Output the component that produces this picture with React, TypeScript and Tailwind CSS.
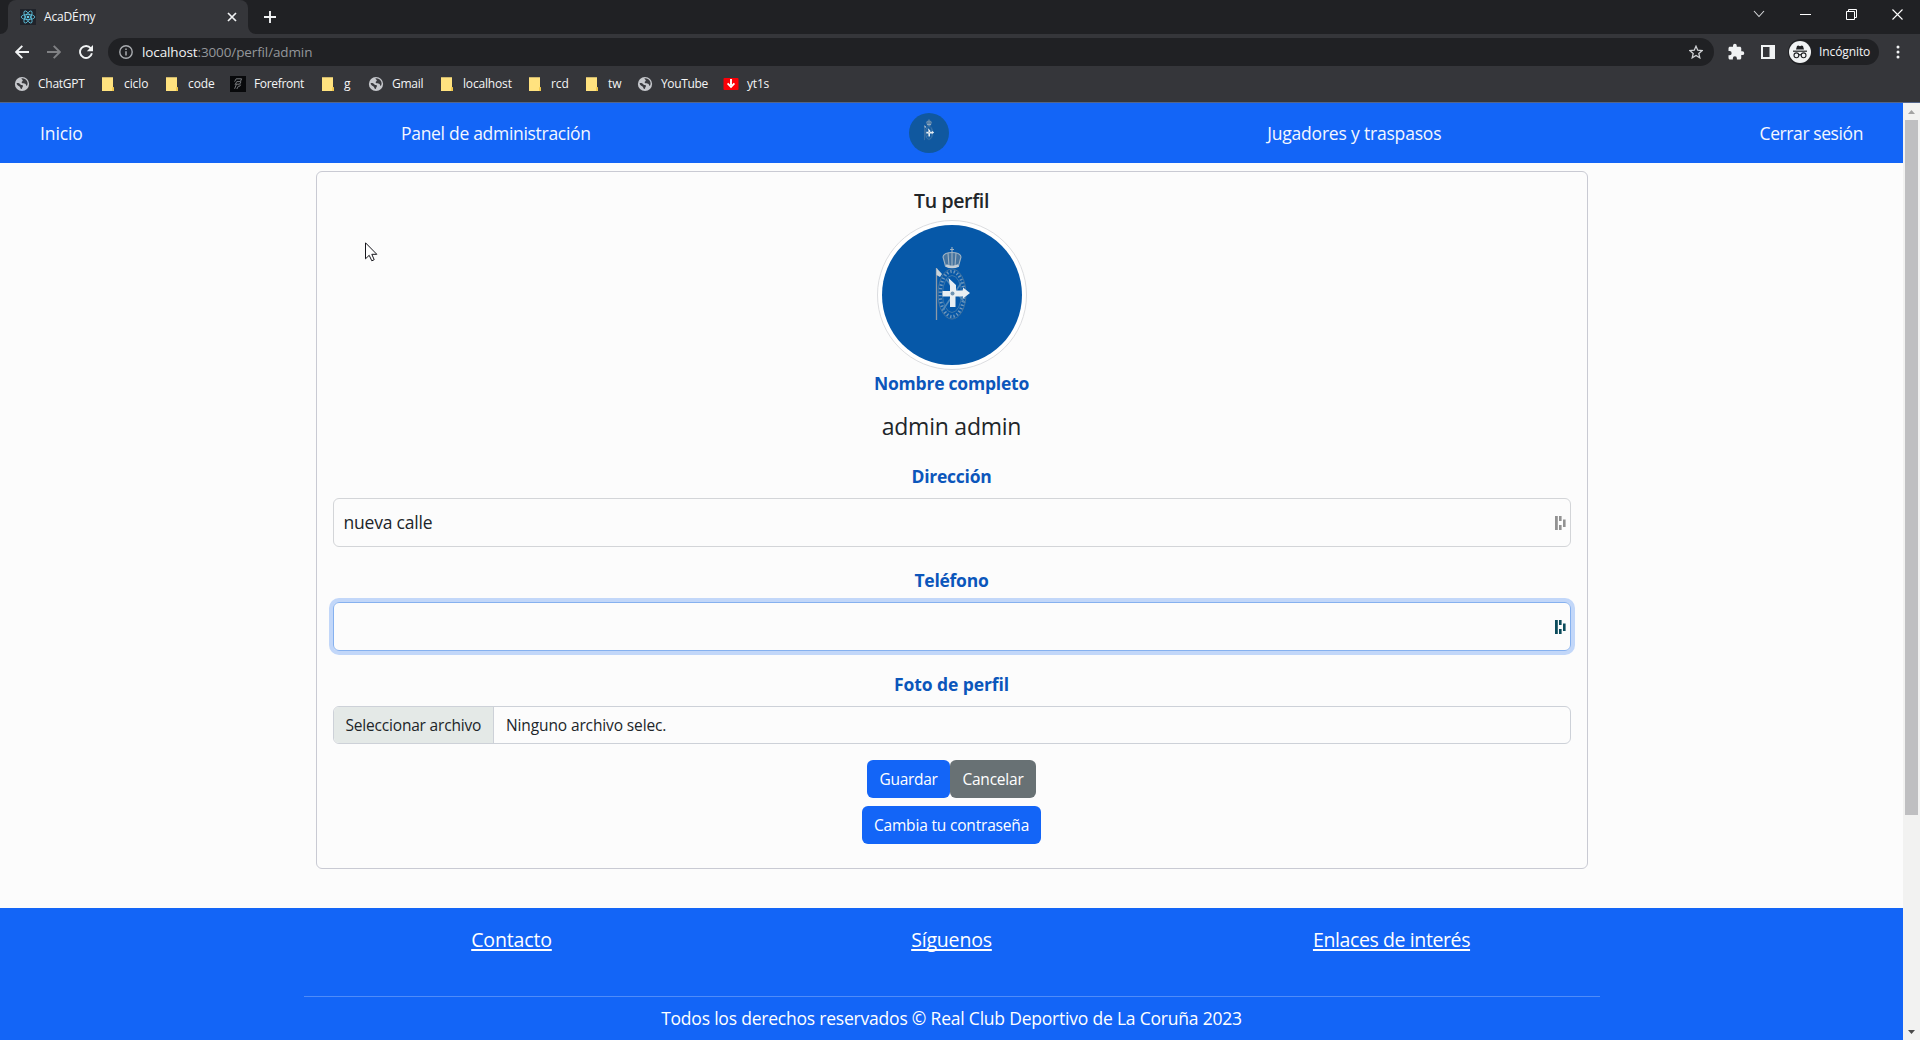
import React from "react";

function Globe() {
  return (
    <svg width="16" height="16" viewBox="0 0 16 16" className="shrink-0">
      <circle cx="8" cy="8" r="7.1" fill="#c6c8cc" />
      <path d="M2.6 7.2C4.2 6.6 5.6 7.4 6.4 8.4C7.2 9.2 8.6 8.6 9 9.6C9.3 10.6 8.2 11 8 12.6C7.4 13.4 6.4 12.6 6.2 11.4C6 10 4.4 10 3.6 9.2C3 8.6 2.6 8 2.6 7.2Z" fill="#3a3b3f" />
      <path d="M7.4 2.4C9.4 2 12 3.2 13.2 5.4C13.9 7 13.6 8.8 12.8 10C11.8 9.6 12.2 8.2 11.2 7.8C10 7.4 8.6 7.8 7.8 6.8C7 5.6 9 5.2 8.8 4.2C8.6 3.4 7.6 3.4 7.4 2.4Z" fill="#3a3b3f" />
    </svg>
  );
}

function Folder() {
  return (
    <svg width="16" height="16" viewBox="0 0 16 16" className="shrink-0">
      <path d="M2 1.2H13V11.5H14V15H2Z" fill="#ffe27f" />
      <path d="M12 11.2H14V15H12Z" fill="#f2c94c" />
    </svg>
  );
}

function ForefrontIcon() {
  return (
    <svg width="16" height="16" viewBox="0 0 16 16" className="shrink-0">
      <rect width="16" height="16" fill="#08090b" />
      <g fill="none" stroke="#85878a" strokeWidth="0.9">
        <path d="M4.600 5.600L6.200 2.800H11.600L10.400 5.600H6.800L5 8.800" />
        <path d="M5.600 8.200H9.600L11 5.800M4.600 12.800L6.400 8.400M6.800 13L8.400 10.200H9.800L10.600 8.600" />
      </g>
    </svg>
  );
}

function DownloadIcon() {
  return (
    <svg width="16" height="16" viewBox="0 0 16 16" className="shrink-0">
      <rect x="0.5" y="2" width="15" height="12" rx="1" fill="#fb0007" />
      <path d="M8 3V9M4.6 7.4L8 10.8L11.4 7.4" fill="none" stroke="#fff" strokeWidth="1.9" />
    </svg>
  );
}

function ReactIcon() {
  return (
    <svg width="16" height="16" viewBox="0 0 16 16" className="shrink-0">
      <rect width="16" height="16" fill="#20232a" />
      <g fill="none" stroke="#61c9e6" strokeWidth="0.8">
        <ellipse cx="8" cy="8" rx="6.8" ry="2.6" />
        <ellipse cx="8" cy="8" rx="6.8" ry="2.6" transform="rotate(60 8 8)" />
        <ellipse cx="8" cy="8" rx="6.8" ry="2.6" transform="rotate(120 8 8)" />
      </g>
      <circle cx="8" cy="8" r="1.3" fill="#61c9e6" />
    </svg>
  );
}

function Crest({ size }: { size: number }) {
  return (
    <svg width={size} height={size} viewBox="0 0 140 140" className="block">
      <g fill="none" stroke="#9fb2c2" strokeWidth="1.1">
        <path d="M61 32C62 26 78 26 79 32L76.500 41C72 42.500 67 42.500 63.500 41Z" fill="#46749f" />
        <path d="M66 28L67 41M70 26V42M74 28L73 41M70 22V27M68 24.500H72" />
      </g>
      <path d="M64 40.500C68 42.500 72 42.500 76.500 40.500" stroke="#c3ced7" strokeWidth="2.600" fill="none" />
      <path d="M54.500 43V95" stroke="#8d9aa6" strokeWidth="1.3" />
      <path d="M54.500 43L60 49L58 52L54.500 50Z" fill="#c9d4dc" />
      <ellipse cx="70" cy="69" rx="14" ry="25" fill="none" stroke="#44749f" strokeWidth="1" />
      <ellipse cx="70" cy="69" rx="11.800" ry="22.500" fill="none" stroke="#a9bac8" strokeWidth="3.200" strokeDasharray="1.400 2.100" strokeOpacity="0.650" />
      <ellipse cx="70" cy="69" rx="9.500" ry="18.500" fill="none" stroke="#3f78ab" strokeWidth="1" />
      <path d="M64 54L83 78M60 86L80 57" stroke="#5088b9" strokeWidth="1.600" />
      <path d="M66.500 53L74 60V65.500H81V62.500L88 68L81 73.500V71.500H73.500V82H68V71.500H60.500V66H68V61Z" fill="#e8eef2" />
      <circle cx="70.500" cy="68.500" r="2" fill="#6e93b1" />
    </svg>
  );
}

function FieldMark({ className }: { className: string }) {
  return (
    <svg width="11" height="14" viewBox="0 0 11 14" className={className} fill="currentColor">
      <rect x="0" y="0" width="2.800" height="14" />
      <rect x="4" y="0" width="2.600" height="5" />
      <rect x="4" y="9" width="2.600" height="5" />
      <rect x="8" y="3.500" width="2.600" height="7.500" />
    </svg>
  );
}

const bookmarks = [
  { icon: <Globe />, name: "ChatGPT", cls: "w-[86px] tracking-[-0.25px]" },
  { icon: <Folder />, name: "ciclo", cls: "w-[64px] tracking-[-0.1px]" },
  { icon: <Folder />, name: "code", cls: "w-[66px] tracking-[-0.1px]" },
  { icon: <ForefrontIcon />, name: "Forefront", cls: "w-[90px] tracking-[-0.32px]" },
  { icon: <Folder />, name: "g", cls: "w-[48px]" },
  { icon: <Globe />, name: "Gmail", cls: "w-[71px] tracking-[-0.25px]" },
  { icon: <Folder />, name: "localhost", cls: "w-[88px] tracking-[-0.17px]" },
  { icon: <Folder />, name: "rcd", cls: "w-[57px] tracking-[-0.1px]" },
  { icon: <Folder />, name: "tw", cls: "w-[53px] tracking-[-0.1px]" },
  { icon: <Globe />, name: "YouTube", cls: "w-[86px] tracking-[-0.36px]" },
  { icon: <DownloadIcon />, name: "yt1s", cls: "w-[60px] tracking-[-0.2px]" },
];

function BrowserChrome() {
  return (
    <header className="h-[103px] shrink-0 border-b border-[#53658a] bg-[#35363a] text-xs text-[#f4f5f6]">
      <div className="flex h-[34px] items-center bg-[#202124]">
        <div className="relative ml-2 flex h-full w-[240px] shrink-0 items-center rounded-t-lg bg-[#35363a] pl-3 pr-[11px]">
          <svg width="8" height="8" className="absolute -left-2 bottom-0"><path d="M8 0V8H0A8 8 0 0 0 8 0Z" fill="#35363a" /></svg>
          <svg width="8" height="8" className="absolute -right-2 bottom-0"><path d="M0 0V8H8A8 8 0 0 1 0 0Z" fill="#35363a" /></svg>
          <ReactIcon />
          <span className="ml-2 flex-1 tracking-[-0.15px]">AcaDÉmy</span>
          <svg width="10" height="10" viewBox="0 0 10 10"><path d="M1 1L9 9M9 1L1 9" stroke="#f1f3f4" strokeWidth="1.700" /></svg>
        </div>
        <svg width="12" height="12" viewBox="0 0 12 12" className="ml-4"><path d="M6 0V12M0 6H12" stroke="#f1f3f4" strokeWidth="1.900" /></svg>
        <div className="mb-1.5 ml-auto flex items-center pr-[17px]">
          <svg width="12" height="8" viewBox="0 0 12 8"><path d="M1 1L6 6.500L11 1" fill="none" stroke="#d6d8da" strokeWidth="1.100" /></svg>
          <svg width="11" height="11" viewBox="0 0 11 11" className="ml-[35px]"><path d="M0 5.500H11" stroke="#fff" /></svg>
          <svg width="11" height="11" viewBox="0 0 11 11" className="ml-[35px]"><path d="M0.500 2.500H8.500V10.500H0.500ZM2.500 2.500V0.500H10.500V8.500H8.500" fill="none" stroke="#fff" /></svg>
          <svg width="11" height="11" viewBox="0 0 11 11" className="ml-[35px]"><path d="M0.500 0.500L10.500 10.500M10.500 0.500L0.500 10.500" stroke="#fff" strokeWidth="1.100" /></svg>
        </div>
      </div>

      <div className="flex h-9 items-center pl-[15px] pr-5">
        <svg width="14" height="14" viewBox="0 0 14 14" fill="none" stroke="#f1f3f4" strokeWidth="1.900"><path d="M14 7H1.500M7.300 0.800L1.200 7L7.300 13.200" /></svg>
        <svg width="14" height="14" viewBox="0 0 14 14" fill="none" stroke="#808184" strokeWidth="1.900" className="ml-[18px]"><path d="M0 7H12.500M6.700 0.800L12.800 7L6.700 13.200" /></svg>
        <svg width="14" height="14" viewBox="0 0 14 14" fill="none" stroke="#f1f3f4" strokeWidth="1.900" className="ml-[18px]"><path d="M11.800 3.300A6 6 0 1 0 12.900 8.300" /><path d="M14 0V6.200H7.800Z" fill="#f1f3f4" stroke="none" /></svg>
        <div className="ml-[15px] flex h-7 flex-1 items-center rounded-full bg-[#202124] pl-[11px] pr-[11px]">
          <svg width="14" height="14" viewBox="0 0 14 14" fill="none" stroke="#a9acb0"><circle cx="7" cy="7" r="6.200" strokeWidth="1.400" /><path d="M7 6.200V10.500M7 3.500V5" strokeWidth="1.500" /></svg>
          <span className="ml-[9px] flex-1 text-[13.5px] tracking-[-0.12px] text-[#94979b]"><span className="text-[#f1f3f4]">localhost</span>:3000/perfil/admin</span>
          <svg width="14" height="14" viewBox="0 0 24 24" fill="none" stroke="#d0d2d5" strokeWidth="2.200"><path d="M12 2L15 9L22.500 9.600L16.800 14.500L18.500 22L12 18L5.500 22L7.200 14.500L1.500 9.600L9 9Z" /></svg>
        </div>
        <svg width="18" height="18" viewBox="0 0 24 24" fill="#f1f3f4" className="ml-[13px]"><path d="M20.500 11H19V7c0-1.100-.900-2-2-2h-4V3.500a2.500 2.500 0 0 0-5 0V5H4c-1.100 0-1.990.900-1.990 2v3.800H3.500a2.700 2.700 0 0 1 0 5.400H2V20c0 1.100.900 2 2 2h3.800v-1.500a2.700 2.700 0 0 1 5.400 0V22H17c1.100 0 2-.900 2-2v-4h1.500a2.500 2.500 0 0 0 0-5z" /></svg>
        <svg width="14" height="14" viewBox="0 0 14 14" className="ml-4"><path d="M1 1H13V13H1Z" fill="none" stroke="#f1f3f4" strokeWidth="2" /><path d="M8.500 1H13V13H8.500Z" fill="#f1f3f4" /></svg>
        <div className="ml-[13px] flex h-[26px] w-[91px] shrink-0 items-center rounded-full bg-[#202124] pl-px">
          <svg width="22" height="22" viewBox="0 0 22 22">
            <circle cx="11" cy="11" r="11" fill="#f1f3f4" />
            <path d="M8 5L9.300 4.600L11 5.200L12.700 4.600L14 5L15 8.500H7Z" fill="#202124" />
            <path d="M4 10.200H18" stroke="#202124" strokeWidth="1.200" />
            <g fill="none" stroke="#202124" strokeWidth="1.100"><circle cx="7.400" cy="14.300" r="2.400" /><circle cx="14.600" cy="14.300" r="2.400" /><path d="M9.800 14Q11 13.200 12.200 14" /></g>
          </svg>
          <span className="ml-2 tracking-[-0.1px]">Incógnito</span>
        </div>
        <svg width="4" height="14" viewBox="0 0 4 14" fill="#f1f3f4" className="ml-[17px]"><circle cx="2" cy="2" r="1.500" /><circle cx="2" cy="7" r="1.500" /><circle cx="2" cy="12" r="1.500" /></svg>
      </div>

      <div className="flex h-[28px] items-center pl-[14px]">
        {bookmarks.map((b) => (
          <div key={b.name} className={`flex shrink-0 items-center gap-2 ${b.cls}`}>
            {b.icon}
            <span>{b.name}</span>
          </div>
        ))}
      </div>
    </header>
  );
}

function Navbar() {
  return (
    <nav className="flex h-[60px] items-center justify-between bg-[#1365f7] px-10 text-[17.5px] leading-[27px] text-[#f3f7ff]">
      <span className="tracking-[-0.1px]">Inicio</span>
      <span className="tracking-[-0.3px]">Panel de administración</span>
      <span className="rounded-full bg-[#10589f]"><Crest size={40} /></span>
      <span className="tracking-[-0.19px]">Jugadores y traspasos</span>
      <span className="tracking-[-0.41px]">Cerrar sesión</span>
    </nav>
  );
}

function ProfileCard() {
  const label = "text-[17.5px] leading-[27px] font-bold text-[#0b56bb]";
  const button = "flex h-[38px] items-center justify-center whitespace-nowrap rounded-md text-[15.5px] leading-6 text-white";
  return (
    <section className="relative mx-auto mt-2 flex h-[698px] w-[1272px] flex-col items-center rounded-md border border-[#c9cad3] p-4 text-[#212529]">
      <h5 className="mt-px mb-[7px] text-[19.5px] leading-6 font-semibold tracking-[-0.35px]">Tu perfil</h5>
      <div className="rounded-full border border-[#dcdde0] bg-white p-1">
        <div className="rounded-full bg-[#0658a8]"><Crest size={140} /></div>
      </div>
      <div className={`${label} tracking-[-0.22px]`}>Nombre completo</div>
      <p className="mt-[11px] mb-[19px] text-[23px] leading-9 tracking-[-0.235px]">admin admin</p>

      <div className={`${label} tracking-[-0.26px]`}>Dirección</div>
      <div className="mt-2 mb-5 flex h-[49px] w-full items-center justify-between rounded-md border border-[#d3d5d8] pl-[10px] pr-1 text-[17.5px] tracking-[-0.2px]">
        <span>nueva calle</span>
        <FieldMark className="text-[#929292]" />
      </div>

      <div className={`${label} tracking-[-0.26px]`}>Teléfono</div>
      <div className="mt-2 mb-5 flex h-[49px] w-full items-center justify-end rounded-md border border-[#86b1ef] pr-1 ring-4 ring-[#c2d7f9]">
        <FieldMark className="text-[#0c4c5c]" />
      </div>

      <div className={`${label} tracking-[-0.08px]`}>Foto de perfil</div>
      <div className="mt-2 mb-4 flex h-[38px] w-full items-center overflow-hidden rounded-md border border-[#cdd1d8] text-[15.5px] leading-6">
        <span className="flex h-full w-[160px] items-center border-r border-[#cdd1d8] bg-[#e4e9e7] pl-3 tracking-[-0.19px]">Seleccionar archivo</span>
        <span className="pl-[12.5px] tracking-[-0.12px]">Ninguno archivo selec.</span>
      </div>

      <div className="mb-2 flex">
        <button className={`${button} w-[83px] bg-[#1365f7] tracking-[-0.3px]`}>Guardar</button>
        <button className={`${button} w-[86px] bg-[#687174] tracking-[-0.22px]`}>Cancelar</button>
      </div>
      <button className={`${button} w-[179px] bg-[#1365f7] tracking-[-0.18px]`}>Cambia tu contraseña</button>

      <svg width="13" height="20" viewBox="0 0 13 20" className="absolute left-[48px] top-[70px]">
        <path d="M0.500 0.800V16.800L4.200 13.300L6.800 18.800L9.200 17.700L6.800 12.300H11.800Z" fill="#fff" stroke="#16161c" strokeWidth="1" />
      </svg>
    </section>
  );
}

function Footer() {
  return (
    <footer className="mt-[39px] h-[132px] bg-[#1365f7] pt-5 text-white">
      <div className="mx-auto grid w-[1320px] grid-cols-3 text-center text-[19.5px] leading-6 underline decoration-2 underline-offset-2 [text-decoration-skip-ink:none]">
        <span className="tracking-[-0.15px]">Contacto</span>
        <span className="tracking-[-0.18px]">Síguenos</span>
        <span className="tracking-[-0.39px]">Enlaces de interés</span>
      </div>
      <hr className="mx-auto mt-[44px] w-[1296px] border-t border-[#4f8cf9]" />
      <p className="mt-2 text-center text-[17.5px] leading-[27px] tracking-[-0.21px]">Todos los derechos reservados © Real Club Deportivo de La Coruña 2023</p>
    </footer>
  );
}

function Scrollbar() {
  return (
    <div className="flex w-[17px] shrink-0 flex-col items-center bg-[#f2f2f1]">
      <svg width="17" height="17" viewBox="0 0 17 17"><path d="M5 11L8.500 7L12 11Z" fill="#a3a3a3" /></svg>
      <div className="h-[695px] w-[13px] bg-[#bfbfc1]" />
      <svg width="17" height="17" viewBox="0 0 17 17" className="mt-auto"><path d="M5 7L8.500 11L12 7Z" fill="#4a4a4a" /></svg>
    </div>
  );
}

export default function App() {
  return (
    <div className="flex h-[1040px] w-[1920px] flex-col overflow-hidden bg-[#fcfcfc] font-['Open_Sans','Noto_Sans',sans-serif]">
      <BrowserChrome />
      <div className="flex flex-1">
        <div className="w-[1903px] shrink-0">
          <Navbar />
          <ProfileCard />
          <Footer />
        </div>
        <Scrollbar />
      </div>
    </div>
  );
}
